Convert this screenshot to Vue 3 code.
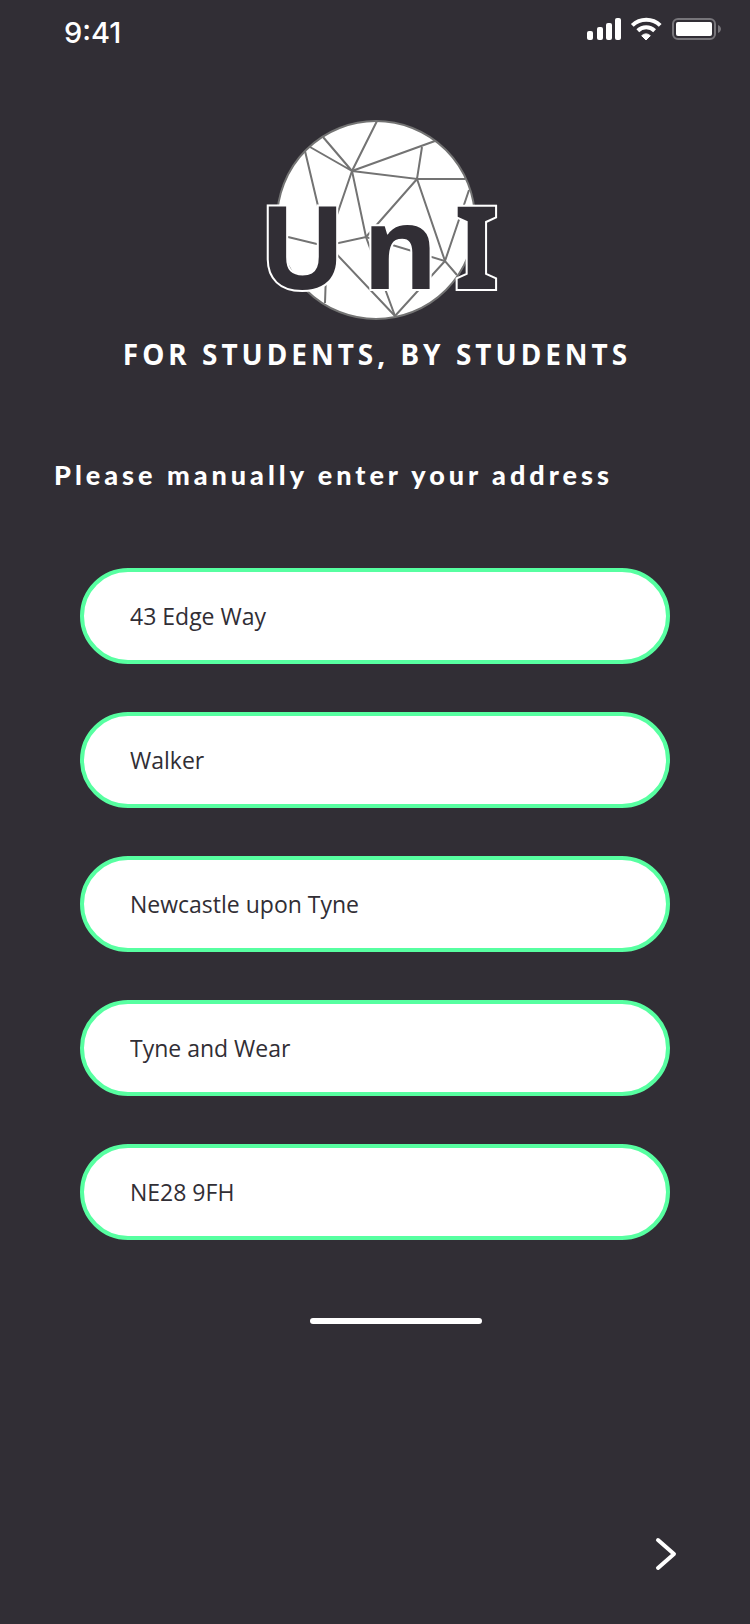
<script setup>
import { reactive } from 'vue'

const fields = reactive([
  { id: 'street', label: 'Street address', value: '43 Edge Way' },
  { id: 'district', label: 'District', value: 'Walker' },
  { id: 'city', label: 'City', value: 'Newcastle upon Tyne' },
  { id: 'county', label: 'County', value: 'Tyne and Wear' },
  { id: 'postcode', label: 'Postcode', value: 'NE28 9FH' },
])
</script>

<template>
  <div class="screen">
    <header class="status">
      <time class="clock">9:41</time>
      <svg class="indicators" viewBox="0 0 136 26" aria-hidden="true">
        <g fill="#fff">
          <rect x="1" y="15" width="6" height="9" rx="2" />
          <rect x="11" y="11" width="6" height="13" rx="2" />
          <rect x="20" y="7" width="6" height="17" rx="2" />
          <rect x="29" y="2" width="6" height="22" rx="2" />
          <path d="M60 24l-4.300-4.300a6 6 0 0 1 8.600 0z" stroke="#fff" stroke-linejoin="round" />
        </g>
        <g fill="none" stroke="#fff" stroke-width="4">
          <path d="M46.300 9.400a20 20 0 0 1 27.900 0" />
          <path d="M51.800 14.800a12 12 0 0 1 16.800 0" />
        </g>
        <rect x="87" y="3" width="42" height="20" rx="5" fill="none" stroke="#77757a" stroke-width="2" />
        <rect x="90" y="6" width="36" height="14" rx="2" fill="#fff" />
        <path d="M132 9c4 2 4 6 0 8z" fill="#77757a" />
      </svg>
    </header>

    <div class="brand">
      <svg class="logo" viewBox="0 0 250 220" role="img" aria-label="UnI">
        <circle cx="121" cy="110" r="99" fill="#fff" stroke="#737373" stroke-width="2" />
        <g class="web">
          <path d="M122 11L97 61L111 127L140 206" />
          <path d="M68 27L97 61L55 37M97 61L180 31M167 37L162 69L97 61" />
          <path d="M162 69H210M50 41L72 134L140 206L190 151L162 69L111 127" />
          <path d="M33 127L70 136L111 127L190 151L202 165" />
          <path d="M97 61L72 134L70 193M214 80L190 151" />
        </g>
        <text class="letters" y="179" x="4 108 199">UnI</text>
      </svg>
      <p class="tagline">FOR STUDENTS, BY STUDENTS</p>
    </div>

    <form class="form" @submit.prevent>
      <h1 class="prompt">Please manually enter your address</h1>
      <div class="fields">
        <input
          v-for="field in fields"
          :id="field.id"
          :key="field.id"
          v-model="field.value"
          class="field"
          type="text"
          :aria-label="field.label"
        />
      </div>
      <div class="handle"></div>
      <button class="next" type="submit" aria-label="Next">
        <svg viewBox="0 0 24 36" aria-hidden="true">
          <path d="M4 4L20 18L4 32" />
        </svg>
      </button>
    </form>
  </div>
</template>

<style>
body {
  background: #312e35;
}
</style>

<style scoped>
.screen {
  display: flex;
  flex-direction: column;
  box-sizing: border-box;
  min-height: 100vh;
  background: #312e35;
  color: #fff;
  font-family: "Noto Sans", "Open Sans", sans-serif;
}

.status {
  display: flex;
  justify-content: space-between;
  align-items: flex-start;
  height: 110px;
  box-sizing: border-box;
  padding: 16px 28px 0 64px;
}

.clock {
  font: 500 29px/34px Inter, sans-serif;
}

.indicators {
  width: 136px;
  height: 26px;
}

.brand {
  display: flex;
  flex-direction: column;
  align-items: center;
}

.logo {
  width: 250px;
  height: 220px;
  margin-left: 10px;
}

.web {
  fill: none;
  stroke: #737373;
  stroke-width: 2;
}

.letters {
  fill: #312e35;
  stroke: #fff;
  stroke-width: 4;
  paint-order: stroke;
  font: bold 115px "Noto Sans", sans-serif;
}

.tagline {
  margin: 4px 0 0;
  padding-left: 4px;
  font-size: 28px;
  font-weight: 700;
  line-height: 40px;
  letter-spacing: 4px;
  white-space: nowrap;
}

.form {
  display: flex;
  flex: 1;
  flex-direction: column;
}

.prompt {
  margin: 80px 54px 72px;
  font: 900 27px/42px Lato, sans-serif;
  letter-spacing: 4px;
  white-space: nowrap;
}

.fields {
  display: flex;
  flex-direction: column;
  gap: 48px;
  padding: 0 80px;
}

.field {
  box-sizing: border-box;
  width: 100%;
  height: 96px;
  padding: 0 46px;
  border: 4px solid #57ffa1;
  border-radius: 48px;
  outline: none;
  background: #fff;
  color: #312e35;
  font: 23px "Open Sans", sans-serif;
}

.handle {
  align-self: center;
  width: 172px;
  height: 6px;
  margin: 78px 0 0 42px;
  border-radius: 3px;
  background: #fff;
}

.next {
  align-self: flex-end;
  margin: auto 72px 52px 0;
  padding: 0;
  border: 0;
  background: none;
  cursor: pointer;
}

.next svg {
  display: block;
  width: 24px;
  height: 36px;
  fill: none;
  stroke: #fff;
  stroke-width: 4;
  stroke-linecap: round;
  stroke-linejoin: round;
}
</style>
